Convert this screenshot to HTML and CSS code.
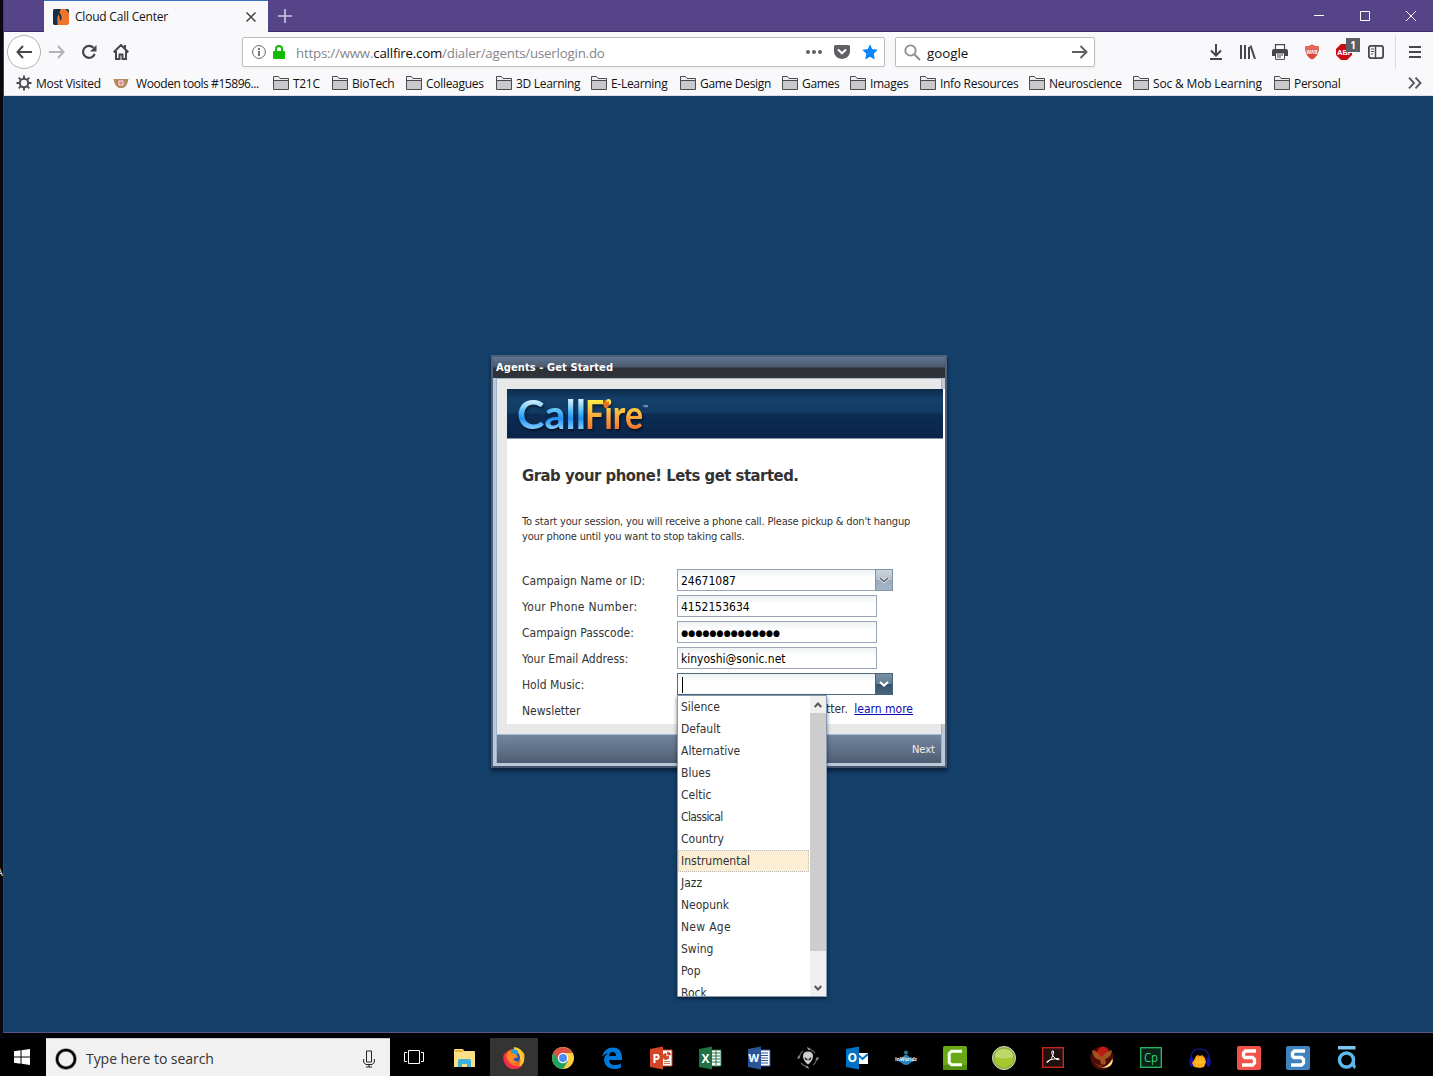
FILE: index.html
```html
<!DOCTYPE html>
<html lang="en">
<head>
<meta charset="utf-8">
<title>Cloud Call Center</title>
<link rel="stylesheet" href="styles.css">
</head>
<body>
<svg class="defs" width="0" height="0">
  <symbol id="folder" viewBox="0 0 16 16"><path d="M.5 14.500V1.500h5l1.500 2h8.500v11z" fill="#c9c9cb" stroke="#4a4a4f"/><path d="M1 5.500h14.500" stroke="#4a4a4f" fill="none"/><path d="M1 2h4.300l1.500 2H15v1H1z" fill="#eee"/></symbol>
</svg>
<div class="screen">
  <div class="desktop"><span class="sliver">A</span></div>
  <main class="window">
    <header class="titlebar">
      <div class="tab">
        <svg width="16" height="16" viewBox="0 0 16 16"><rect width="16" height="16" rx="2" fill="#ee7429"/><path d="M2 0h6q-1.500 2-1.500 4Q9 6 8.500 10L7 12Q7 8 5.500 5 3.500 9 4.500 13v3H2q-2 0-2-2V2q0-2 2-2z" fill="#12304a"/><path d="M12.500 0H14q2 0 2 2v2z" fill="#12304a"/></svg>
        <span class="tab-title">Cloud Call Center</span>
        <svg class="tab-close" width="10" height="10" viewBox="0 0 10 10"><path d="M.5.500l9 9m0-9l-9 9" stroke="#444" stroke-width="1.500"/></svg>
      </div>
      <svg class="newtab" width="14" height="14" viewBox="0 0 14 14"><path d="M7 0v14M0 7h14" stroke="#cdc6e0" stroke-width="1.600"/></svg>
      <svg class="winctl" width="104" height="12" viewBox="0 0 104 12"><path d="M1 5.500h10M47.500 1.500h9v9h-9zM93 1l10 10m0-10L93 11" stroke="#fff" fill="none"/></svg>
    </header>
    <nav class="navbar">
      <span class="back"><svg width="16" height="14" viewBox="0 0 16 14"><path d="M7 1L1.500 7 7 13M2 7h14" fill="none" stroke="#47474b" stroke-width="2"/></svg></span>
      <svg class="fwd" width="16" height="14" viewBox="0 0 16 14"><path d="M9 1l5.500 6L9 13M14 7H0" fill="none" stroke="#b3b3b6" stroke-width="2"/></svg>
      <svg class="reload" width="16" height="16" viewBox="0 0 16 16"><path d="M13.700 9.800A6 6 0 1 1 12.500 3.800" fill="none" stroke="#47474b" stroke-width="2.200"/><path d="M15.500 1v6.500H9z" fill="#47474b"/></svg>
      <svg class="home" width="16" height="16" viewBox="0 0 16 16"><path d="M.7 8.200L8 1l7.300 7.200M3 7v8h3.500v-4.500h3V15H13V7M12 1v4" fill="none" stroke="#47474b" stroke-width="2"/></svg>
      <div class="urlbar">
        <svg width="14" height="14" viewBox="0 0 14 14"><circle cx="7" cy="7" r="6.400" fill="none" stroke="#666"/><path d="M7 3v2M7 6v5" stroke="#666" stroke-width="1.800"/></svg>
        <svg class="lock" width="12" height="14" viewBox="0 0 12 14"><path d="M3 7V4a3 3 0 0 1 6 0v3" fill="none" stroke="#12bc00" stroke-width="2"/><rect y="6" width="12" height="8" rx="1" fill="#12bc00"/></svg>
        <span class="url">https://www.<b>callfire.com</b>/dialer/agents/userlogin.do</span>
        <svg class="dots" width="16" height="4" viewBox="0 0 16 4"><g fill="#606064"><circle cx="2" cy="2" r="2"/><circle cx="8" cy="2" r="2"/><circle cx="14" cy="2" r="2"/></g></svg>
        <svg class="pocket" width="16" height="14" viewBox="0 0 16 14"><path d="M1.500 0h13q1.500 0 1.500 1.500V6q0 4-3 6.200Q8 15.700 3 12.200 0 10 0 6V1.500Q0 0 1.500 0z" fill="#606064"/><path d="M4.500 5L8 8.300 11.500 5" fill="none" stroke="#fff" stroke-width="2" stroke-linecap="round"/></svg>
        <svg class="star" width="16" height="16" viewBox="0 0 16 16"><path d="M8 .2l2.200 4.900 5.500.7-4 3.900 1.100 5.900L8 12.800l-4.800 2.800 1.100-5.900-4-3.900 5.500-.7z" fill="#0a84ff"/></svg>
      </div>
      <div class="search">
        <svg width="17" height="17" viewBox="0 0 17 17"><circle cx="6.500" cy="6.500" r="5.200" fill="none" stroke="#8e8e91" stroke-width="1.800"/><path d="M10.500 10.500l5.500 5.500" stroke="#8e8e91" stroke-width="2"/></svg>
        <span class="query">google</span>
        <svg class="go" width="16" height="14" viewBox="0 0 16 14"><path d="M8.500 1l6 6-6 6M15 7H0" fill="none" stroke="#606064" stroke-width="1.900"/></svg>
      </div>
      <div class="tools">
        <svg width="16" height="16" viewBox="0 0 16 16"><path d="M8 0v11M3 6.500l5 5 5-5M2 15h12" fill="none" stroke="#47474b" stroke-width="2"/></svg>
        <svg width="16" height="14" viewBox="0 0 16 14"><path d="M1 0v14M5 0v14M9 2v12M10.500.500L15 14" fill="none" stroke="#47474b" stroke-width="2"/></svg>
        <svg width="16" height="16" viewBox="0 0 16 16"><path d="M3.500 5V.600h9V5" fill="#fff" stroke="#47474b" stroke-width="1.200"/><path d="M2 5h12q2 0 2 2v5H0V7q0-2 2-2z" fill="#47474b"/><path d="M3.500 9h9v6.400h-9zM5 11h6M5 13h4" fill="#fff" stroke="#47474b"/></svg>
        <svg width="16" height="16" viewBox="0 0 16 16"><path d="M8 .5q3 2 7 2 0 10-7 13Q1 12.500 1 2.500q4 0 7-2z" fill="#d94a3c"/><path d="M8 .5q3 2 7 2 0 3-.6 5H1.500Q1 5.500 1 2.500q4 0 7-2z" fill="#e2695b"/><text x="2.500" y="9.500" class="wab" textLength="11" lengthAdjust="spacingAndGlyphs">WAB</text></svg>
        <span class="abp"><svg width="16" height="16" viewBox="0 0 16 16"><path d="M5 0h6l5 5v6l-5 5H5l-5-5V5z" fill="#c70d12"/><text x="1" y="11" class="abp-text">ABP</text></svg><span class="count">1</span></span>
        <svg width="16" height="14" viewBox="0 0 16 14"><rect x=".9" y=".9" width="14.200" height="12.200" rx="2" fill="none" stroke="#47474b" stroke-width="1.800"/><path d="M7.500 1v12" stroke="#47474b" stroke-width="1.500"/><path d="M3 4h3M3 6.500h3M3 9h2" stroke="#47474b"/></svg>
      </div>
      <div class="menu"><svg width="12" height="12" viewBox="0 0 12 12"><path d="M0 1h12M0 6h12M0 11h12" stroke="#47474b" stroke-width="1.900"/></svg></div>
    </nav>
    <div class="bookmarks">
      <span class="bm w97"><svg viewBox="0 0 16 16"><circle cx="8" cy="8" r="4.200" fill="none" stroke="#4a4a4f" stroke-width="2"/><path d="M8 .5v3M8 12.500v3M.5 8h3M12.500 8h3M2.700 2.700l2.200 2.200M11.100 11.100l2.200 2.200M13.300 2.700l-2.200 2.200M4.900 11.100l-2.200 2.200" stroke="#4a4a4f" stroke-width="1.900"/></svg>Most Visited</span>
      <span class="bm w160 wood"><svg viewBox="0 0 16 16"><path d="M.5 4h15q-1 7-5.500 9H6Q1.500 11 .5 4z" fill="#b28b5c"/><circle cx="8" cy="8" r="3" fill="#f3d5d6"/><path d="M8 5.500v5M5.500 8h5" stroke="#d8708a"/></svg>Wooden tools #15896...</span>
      <span class="bm w59"><svg><use href="#folder"/></svg>T21C</span>
      <span class="bm w74"><svg><use href="#folder"/></svg>BioTech</span>
      <span class="bm w90"><svg><use href="#folder"/></svg>Colleagues</span>
      <span class="bm w95"><svg><use href="#folder"/></svg>3D Learning</span>
      <span class="bm w89"><svg><use href="#folder"/></svg>E-Learning</span>
      <span class="bm w102"><svg><use href="#folder"/></svg>Game Design</span>
      <span class="bm w68"><svg><use href="#folder"/></svg>Games</span>
      <span class="bm w70"><svg><use href="#folder"/></svg>Images</span>
      <span class="bm w109"><svg><use href="#folder"/></svg>Info Resources</span>
      <span class="bm w104"><svg><use href="#folder"/></svg>Neuroscience</span>
      <span class="bm w141 soc"><svg><use href="#folder"/></svg>Soc &amp; Mob Learning</span>
      <span class="bm w97"><svg><use href="#folder"/></svg>Personal</span>
      <svg class="more" width="14" height="12" viewBox="0 0 14 12"><path d="M1 .7L6 6l-5 5.300M7.500.700l5 5.300-5 5.300" fill="none" stroke="#58585c" stroke-width="1.900"/></svg>
    </div>
    <section class="page">
      <div class="dialog">
        <div class="dialog-title">Agents - Get Started</div>
        <div class="dialog-body">
          <div class="panel">
            <div class="banner">
              <svg width="142" height="49" viewBox="0 0 142 49">
                <defs>
                  <linearGradient id="blue" gradientUnits="userSpaceOnUse" x1="0" y1="11" x2="0" y2="41"><stop offset="0" stop-color="#d5f3ff"/><stop offset=".42" stop-color="#46b5f8"/><stop offset=".62" stop-color="#2392f5"/><stop offset="1" stop-color="#8fd2ff"/></linearGradient>
                  <linearGradient id="fire" gradientUnits="userSpaceOnUse" x1="0" y1="11" x2="0" y2="41"><stop offset="0" stop-color="#fff04a"/><stop offset=".5" stop-color="#fcae3c"/><stop offset="1" stop-color="#f4722c"/></linearGradient>
                </defs>
                <text x="10" y="39.500" textLength="69" lengthAdjust="spacingAndGlyphs" class="logo" fill="url(#blue)">Call</text>
                <text x="78" y="39.500" textLength="58" lengthAdjust="spacingAndGlyphs" class="logo" fill="url(#fire)">Fire</text>
                <path d="M98 19q-4-4 .5-9 0 2.500 1.500 3 1.500-1.500 2 .5.500 4-2 5.500z" fill="#e8701d"/>
                <text x="135" y="20" class="tm">™</text>
              </svg>
            </div>
            <h1>Grab your phone! Lets get started.</h1>
            <p>To start your session, you will receive a phone call. Please pickup &amp; don't hangup<br>your phone until you want to stop taking calls.</p>
            <form>
              <label>Campaign Name or ID:</label><div class="combo"><span class="field">24671087</span><span class="trigger"><svg width="10" height="7" viewBox="0 0 10 7"><path d="M1 1l4 3.500L9 1" fill="none" stroke="#fff" stroke-width="3"/><path d="M1 1l4 3.500L9 1" fill="none" stroke="#68727e" stroke-width="1.700"/></svg></span></div>
              <label class="loose">Your Phone Number:</label><div class="field">4152153634</div>
              <label>Campaign Passcode:</label><div class="field secret">●●●●●●●●●●●●●●</div>
              <label>Your Email Address:</label><div class="field email">kinyoshi@sonic.net</div>
              <label>Hold Music:</label><div class="combo open"><span class="field"><i class="caret"></i></span><span class="trigger"><svg width="10" height="7" viewBox="0 0 10 7"><path d="M1 1l4 3.500L9 1" fill="none" stroke="#fff" stroke-width="2.200"/></svg></span>
                <div class="list">
                  <ul>
                    <li>Silence</li><li>Default</li><li>Alternative</li><li>Blues</li><li>Celtic</li><li class="tight">Classical</li><li>Country</li><li class="sel">Instrumental</li><li>Jazz</li><li>Neopunk</li><li class="loose">New Age</li><li>Swing</li><li>Pop</li><li>Rock</li>
                  </ul>
                  <div class="scroll"><svg width="8" height="6" viewBox="0 0 8 6"><path d="M.7 5L4 1.500 7.300 5" fill="none" stroke="#555" stroke-width="1.900"/></svg><i class="thumb"></i><svg width="8" height="6" viewBox="0 0 8 6"><path d="M.7 1L4 4.500 7.300 1" fill="none" stroke="#555" stroke-width="1.900"/></svg></div>
                </div>
              </div>
              <label>Newsletter</label><div class="news">tter. <a href="#">learn more</a></div>
            </form>
          </div>
          <div class="footer">Next</div>
        </div>
      </div>
    </section>
  </main>
  <footer class="taskbar">
    <div class="start"><svg width="16" height="16" viewBox="0 0 16 16"><path d="M0 2.200l6.500-.9v6.200H0zM7.500 1.200L16 0v7.500H7.500zM0 8.500h6.500v6.200L0 13.800zM7.500 8.500H16V16l-8.500-1.200z" fill="#fff"/></svg></div>
    <div class="cortana">
      <svg width="22" height="22" viewBox="0 0 22 22"><circle cx="11" cy="11" r="9" fill="none" stroke="#999" stroke-width="3.600"/><circle cx="11" cy="11" r="9" fill="none" stroke="#000" stroke-width="2.400"/></svg>
      <span class="hint">Type here to search</span>
      <svg class="mic" width="12" height="18" viewBox="0 0 12 18"><path d="M3.500 1h5v11h-5zM.7 9v3.500L3 14.500h6l2.300-2V9M6 14.500V17M3 17h6" fill="none" stroke="#222"/></svg>
    </div>
    <div class="taskview"><svg width="20" height="14" viewBox="0 0 20 14"><path d="M4.500.500h11v13h-11zM3 2.500H.500v9H3M17 2.500h2.500v9H17" fill="none" stroke="#fff"/></svg></div>
    <div class="apps">
      <span><svg viewBox="0 0 24 24"><path d="M1 4q0-1 1-1h8l1 2h10q1 0 1 1v15H1z" fill="#fbdf87"/><path d="M2 4h8v2H2z" fill="#e6b53f"/><path d="M5 21v-6q0-2 2-2h9q2 0 2 2v6h-4v-3H9v3z" fill="#3eb1dd"/></svg></span>
      <span class="active"><svg viewBox="0 0 24 24"><circle cx="12" cy="13" r="10" fill="#ff6a1f"/><path d="M12 1q7 1 10 7 2 9-5 13 4-8-2-13-4-2-3-7z" fill="#ffd02d"/><path d="M3 6q-3 5-1 10 3 7 10 7 6 0 9-4-6 3-11 0Q4 16 3 6z" fill="#f5284f"/><circle cx="12" cy="11.500" r="6" fill="#2b54b8"/><path d="M7 5q3 2 7 3l2 3-5 2q1 3 5 2-3 5-8 1-4-4-1-11z" fill="#ff8a21"/><path d="M9 4q4-2 7 1l-1 4-4-2z" fill="#1ca5e8"/><path d="M15 1q6 5 5 12l2.500-3q0-3-2-4-3-1-5.500-5z" fill="#ffb52b"/></svg></span>
      <span><svg viewBox="0 0 24 24"><circle cx="12" cy="12" r="11" fill="#ffce44"/><path d="M12 12L2.500 6.500A11 11 0 0 0 12 23l5-8z" fill="#1da462"/><path d="M2.500 6.500l5 8.500L12 7H21.500A11 11 0 0 0 2.500 6.500z" fill="#dd5144"/><circle cx="12" cy="12" r="5.200" fill="#fff"/><circle cx="12" cy="12" r="4" fill="#4c8bf5"/></svg></span>
      <span><svg viewBox="0 0 24 24"><path d="M2 11Q4 1.500 13 1.500q8.500 0 9 9.500v3H9q.5 5 6 5 3.500 0 6-1.500v4Q18 23 14 23q-9-.5-10-9 0-4.500 4.500-7Q4 8 2 11zm7-1h7q0-4-3.500-4Q9.500 6 9 10z" fill="#0078d7"/></svg></span>
      <span><svg viewBox="0 0 24 24"><path d="M12 4h11v16H12z" fill="#fff" stroke="#d24625"/><path d="M17 7.500a3 3 0 1 0 3 3h-3zM18.500 6v3h3a3 3 0 0 0-3-3M15 15.500h6M15 17.500h6" fill="#d24625" stroke="#d24625" stroke-width=".8"/><path d="M1 3l13-2.500v23L1 21z" fill="#d24625"/><text x="3.500" y="16.500" class="office">P</text></svg></span>
      <span><svg viewBox="0 0 24 24"><path d="M12 4h11v16H12z" fill="#fff" stroke="#207245"/><path d="M14 7h8M14 10h8M14 13h8M14 16h8M18 5v14" stroke="#207245"/><path d="M1 3l13-2.500v23L1 21z" fill="#207245"/><text x="3.500" y="16.500" class="office">X</text></svg></span>
      <span><svg viewBox="0 0 24 24"><path d="M12 4h11v16H12z" fill="#fff" stroke="#2a5699"/><path d="M14 7h7M14 9.500h7M14 12h7M14 14.500h7M14 17h7" stroke="#2a5699"/><path d="M1 3l13-2.500v23L1 21z" fill="#2a5699"/><text x="1.500" y="16" class="office word">W</text></svg></span>
      <span><svg viewBox="0 0 24 24"><circle cx="12" cy="12" r="8.500" fill="none" stroke="#666" stroke-width="1.200" stroke-dasharray="8 5.350"/><path d="M11 1l4 2-3 1zM23 11l-2 4-1-3zM13 23l-4-2 3-1zM1 13l2-4 1 3z" fill="#999"/><path d="M12 5.500q5.500 0 5 5.500-1 5-5 7.500Q8 16 7 11q-.5-5.500 5-5.500z" fill="#cecece"/><path d="M8.500 11l3 2v1.500q-2.500 0-3-3.500zM15.500 11l-3 2v1.500q2.500 0 3-3.500z" fill="#222"/></svg></span>
      <span><svg viewBox="0 0 24 24"><path d="M11 7h12v11H11z" fill="#fff"/><path d="M12 8l5.500 5 5.500-5" fill="none" stroke="#0072c6" stroke-width="2"/><path d="M1 3l13-2.500v23L1 21z" fill="#0072c6"/><text x="2.500" y="16" class="office">O</text></svg></span>
      <span><svg viewBox="0 0 24 24"><circle cx="12" cy="6.500" r="2" fill="#297c94"/><path d="M8 12q4-7 8 0l5 2.500-4 2q-5 5-10 0l-4-2z" fill="#2b83ba"/><text x="1" y="15" class="tiny" textLength="22">InWorldz</text></svg></span>
      <span><svg viewBox="0 0 24 24"><rect width="24" height="24" rx="1.500" fill="#69a916"/><path d="M0 19h24v5H0z" fill="#528f10"/><path d="M19 5.200H8.500L6.200 7.500v9l2.300 2.300H19" fill="none" stroke="#f7fff0" stroke-width="3"/></svg></span>
      <span><svg viewBox="0 0 24 24"><circle cx="12" cy="12" r="11.500" fill="#8cac45" stroke="#d6dfbe"/><circle cx="12" cy="12" r="9.500" fill="#a5c92d"/><path d="M3 11Q3 3 12 3t9 8q-9 3-18 0z" fill="#bfd86b"/></svg></span>
      <span><svg viewBox="0 0 24 24"><rect x="1.700" y="1.700" width="20.600" height="19.600" fill="#22100f" stroke="#c8281b" stroke-width="1.400"/><path d="M11 5q2-1 1.500 2-1 6-5.500 9-2 1-1-.5Q9 13 16 12.500q3 0 2 1.300-3 .7-6-3.800Q10 7 11 5z" fill="none" stroke="#fff"/></svg></span>
      <span><svg viewBox="0 0 24 24"><circle cx="12" cy="12" r="11.500" fill="#4d0d08"/><circle cx="13" cy="6" r="5.500" fill="#bb1b12"/><path d="M2 4q6 1 8 6 1.500 1 3 0 2-4 9-6-1 8-7 9l1 4q-2 3-5 1l-1-4Q3 13 2 4z" fill="#a3531d"/><path d="M5 17q6 4 9 1l-3 4Q7 21 5 17z" fill="#7e2b12"/><path d="M11 22q8-2 11.500-9.500Q24 22 11 22z" fill="#ffe48b"/></svg></span>
      <span><svg viewBox="0 0 24 24"><rect x="1.700" y="1.700" width="20.600" height="19.600" fill="#092119" stroke="#27b35c" stroke-width="1.400"/><text x="5" y="16" class="cp" textLength="14" lengthAdjust="spacingAndGlyphs">Cp</text></svg></span>
      <span><svg viewBox="0 0 24 24"><path d="M3 16Q2 3 12 3t9 13" fill="none" stroke="#11117b" stroke-width="1.500"/><ellipse cx="3.500" cy="16" rx="2.200" ry="5" fill="#1015a0"/><ellipse cx="20.500" cy="16" rx="2.200" ry="5" fill="#1015a0"/><path d="M6 14l2-4 2-1 2 1 2-1 3 3 1 4-2 5-4 1-6-1-2-4z" fill="#ff9d13"/><path d="M7 16h10M9 12v9M12 11v10M15 12v8" stroke="#ffd434"/></svg></span>
      <span><svg viewBox="0 0 24 24"><rect width="24" height="24" rx="2" fill="#f1524a"/><path d="M19 5H8.500L6.500 7v3l1.500 1.500h7.500L17.500 13.500v3.500l-2 2H5" fill="none" stroke="#fff" stroke-width="3.300"/></svg></span>
      <span><svg viewBox="0 0 24 24"><rect width="24" height="24" rx="2" fill="#3e83bd"/><path d="M19 5H8.500L6.500 7v3l1.500 1.500h7.500L17.500 13.500v3.500l-2 2H5" fill="none" stroke="#fff" stroke-width="3.300"/></svg></span>
      <span><svg viewBox="0 0 24 24"><path d="M3 0h17.500v3.500H3z" fill="#7cc5ee"/><circle cx="11.500" cy="14" r="7" fill="none" stroke="#5cb9f0" stroke-width="3.400"/><path d="M18.500 13v5q0 2.800 2 3.300" fill="none" stroke="#5cb9f0" stroke-width="3"/></svg></span>
    </div>
  </footer>
</div>
</body>
</html>
```
FILE: styles.css
```css
* { box-sizing: border-box; }
body { margin: 0; background: #000; font-family: "Open Sans", "Noto Sans", sans-serif; overflow: hidden; }
svg { display: block; flex: none; }
.defs { position: absolute; }
.screen { width: 1433px; height: 1076px; display: grid; grid-template: 1038px 38px / 3px 1430px; background: #030307; }
.desktop { background: #08080e; overflow: hidden; padding-top: 866px; }
.sliver { display: block; font-size: 11px; line-height: 12px; color: #ddd; margin-left: -4px; }
.window { height: 1033px; border-left: 1px solid #43396b; border-bottom: 1px solid #5c568a; display: flex; flex-direction: column; background: #f9f9fb; }

.titlebar { height: 32px; background: #554588; border-bottom: 1px solid #3c2e67; display: flex; align-items: center; padding-left: 40px; }
.tab { width: 224px; height: 32px; margin-bottom: -1px; background: #f9f9fb; border-top: 1px solid #3572c4; display: flex; align-items: center; padding: 0 12px 0 9px; }
.tab-title { font-size: 12px; letter-spacing: -.21px; color: #111; margin: -1px 0 0 6px; flex: 1; }
.newtab { margin-left: 10px; }
.winctl { margin: 1px 16px 0 auto; }

.navbar { height: 40px; display: flex; align-items: center; }
.back { width: 34px; height: 34px; margin-left: 3px; border: 1px solid #b1b1b3; border-radius: 50%; background: #fff; display: grid; place-items: center; }
.fwd { margin-left: 8px; }
.reload, .home { margin-left: 16px; }
.urlbar, .search { height: 30px; background: #fff; border: 1px solid #bdbdc0; border-radius: 2px; display: flex; align-items: center; font-size: 13.300px; box-shadow: 0 1px 3px rgba(0,0,0,.06); }
.urlbar { width: 643px; margin-left: 113px; padding-left: 9px; }
.lock { margin-left: 7px; }
.url { margin-left: 11px; width: 500px; margin-right: 10px; color: #85858a; padding-top: 2px; letter-spacing: -.21px; }
.url b { font-weight: 400; color: #0c0c0d; }
.pocket { margin-left: 12px; }
.star { margin-left: 12px; }
.search { width: 200px; margin-left: 10px; padding: 0 6px 0 8px; }
.query { flex: 1; margin-left: 6px; padding-top: 2px; color: #111; }
.tools { display: flex; align-items: center; margin-left: 113px; gap: 16px; }
.wab { font: bold 6px "Open Sans", sans-serif; fill: #fff; }
.abp { position: relative; }
.abp-text { font: bold 7.500px "Liberation Sans", sans-serif; fill: #fff; }
.count { position: absolute; left: 10px; top: -6px; width: 14px; height: 14px; background: #5b6062; color: #fff; font: bold 10px/14px "Open Sans", sans-serif; text-align: center; }
.menu { height: 34px; margin-left: 11px; padding-left: 13px; border-left: 1px solid #dcdce0; display: flex; align-items: center; }

.bookmarks { height: 24px; padding: 0 0 1px 12px; display: flex; align-items: center; font-size: 12px; color: #111; border-bottom: 1px solid #dde; letter-spacing: -.3px; }
.bm { display: flex; align-items: center; gap: 4px; flex: none; white-space: nowrap; }
.bm svg { width: 16px; height: 16px; }
.bm.wood { gap: 7px; letter-spacing: -.43px; }
.bm.soc { letter-spacing: -.17px; }
.w59 { width: 59px; } .w68 { width: 68px; } .w70 { width: 70px; } .w74 { width: 74px; }
.w89 { width: 89px; } .w90 { width: 90px; } .w95 { width: 95px; } .w97 { width: 97px; }
.w102 { width: 102px; } .w104 { width: 104px; } .w109 { width: 109px; } .w141 { width: 141px; } .w160 { width: 160px; }
.more { margin-left: 37px; }

.page { flex: 1; background: #14406a; padding: 259px 0 0 487px; font-family: "DejaVu Sans Condensed", "DejaVu Sans", sans-serif; font-stretch: condensed; }
.dialog { width: 456px; height: 413px; border: 2px solid #4f6078; border-bottom-color: #435469; background: #bdc9d9; box-shadow: 0 3px 4px rgba(0,10,30,.6); display: flex; flex-direction: column; }
.dialog-title { height: 21px; padding-left: 3px; background: linear-gradient(#5f7592, #4a586c 48%, #2d3036 52%, #303338); color: #fff; font: bold 11px/21px "DejaVu Sans Condensed", sans-serif; letter-spacing: .1px; }
.dialog-body { margin: 0 3px; height: 385px; border: 1px solid #9fb3c9; border-bottom: 0; background: #e8e8e8; display: flex; flex-direction: column; }
.panel { width: 438px; height: 335px; margin: 10px 0 10px 10px; background: #fff; color: #333; }
.banner { width: 436px; height: 50px; background: linear-gradient(#0c2b4a, #14406c 22%, #123a64 48%, #0c2c54 52%, #0a2448); border-bottom: 1px solid #8a97a8; }
.logo { font: bold 40px Lato, sans-serif; filter: drop-shadow(1px 2px 1px rgba(0,0,0,.5)); }
.tm { font: 6px "Liberation Sans", sans-serif; fill: #d5dde8; }
h1 { margin: 0; padding: 26px 0 0 15px; font-size: 16.500px; line-height: 21px; font-weight: bold; letter-spacing: -.47px; white-space: nowrap; }
p { margin: 0; padding: 28px 0 0 15px; font-size: 11px; line-height: 15px; letter-spacing: -.17px; white-space: nowrap; }
form { display: grid; grid-template-columns: 155px 240px; grid-auto-rows: 26px; padding: 25px 0 0 15px; font-size: 12px; line-height: 24px; }
.loose { letter-spacing: .3px; }
.tight { letter-spacing: -.6px; }
.field { display: block; width: 200px; height: 22px; border: 1px solid #9aa6b5; background: linear-gradient(#edf2f2, #fff 8px); color: #000; padding-left: 3px; line-height: 23px; }
.combo { display: flex; position: relative; height: 22px; }
.combo .field { width: 198px; border-right: 0; }
.trigger { width: 18px; height: 22px; border: 1px solid #8291a4; background: linear-gradient(#c8d2dc, #b6c3cf 48%, #9aadc0 52%, #a4b5c6); display: flex; justify-content: center; padding-top: 7px; }
.open .field { border-color: #506e80; }
.open .trigger { border-color: #47627a; background: linear-gradient(#7890a4, #637e94 48%, #35536d 52%, #46657f); }
.caret { display: block; width: 1px; height: 16px; margin: 3px 0 0 1px; background: #000; }
.secret { font-size: 9px; }
.news { padding-left: 149px; line-height: 20px; white-space: nowrap; }
.news a { color: #0b0bb5; margin-left: 3px; }
.list { position: absolute; left: 0; top: 22px; width: 150px; height: 302px; border: 1px solid #8499b4; background: #fff; display: flex; overflow: hidden; box-shadow: 0 2px 4px rgba(0,0,0,.5); }
ul { list-style: none; margin: 0; padding: 0; width: 132px; }
li { height: 22px; line-height: 23px; padding-left: 3px; }
li.sel { width: 131px; background: #fbeed2; border: 1px dotted #bbb; line-height: 21px; padding-left: 2px; }
.scroll { width: 16px; height: 300px; background: #f0f0f0; display: flex; flex-direction: column; align-items: center; padding: 6px 0; }
.thumb { width: 16px; height: 238px; background: #cdcdcd; margin: 5px 0 34px; flex: none; }
.footer { height: 29px; flex: none; border-top: 1px solid #a3bbd8; background: linear-gradient(#73869f, #4d5d73); color: #f0f0f0; font-size: 11px; line-height: 29px; text-align: right; padding-right: 6px; }

.taskbar { grid-column: 1 / 3; background: #000; display: flex; }
.start { width: 46px; display: grid; place-items: center; padding-right: 2px; }
.cortana { width: 344px; background: #f1f1f1; border-top: 1px solid #c8c8c8; display: flex; align-items: center; padding: 2px 15px 0 9px; }
.hint { flex: 1; margin-left: 9px; font-size: 14px; letter-spacing: -.05px; color: #333; }
.taskview { width: 48px; display: grid; place-items: center; }
.apps { display: flex; gap: 1px; margin-left: 3px; }
.apps span { width: 48px; display: grid; place-items: center; }
.apps .active { background: #343434; }
.apps svg { width: 24px; height: 24px; margin-top: 2px; }
.office { font: bold 12px "Open Sans", sans-serif; fill: #fff; }
.word { font-size: 11px; }
.tiny { font: bold 5px "Open Sans", sans-serif; fill: #e6f4ff; }
.cp { font: 13px "Open Sans", sans-serif; fill: #36d67a; }
```
